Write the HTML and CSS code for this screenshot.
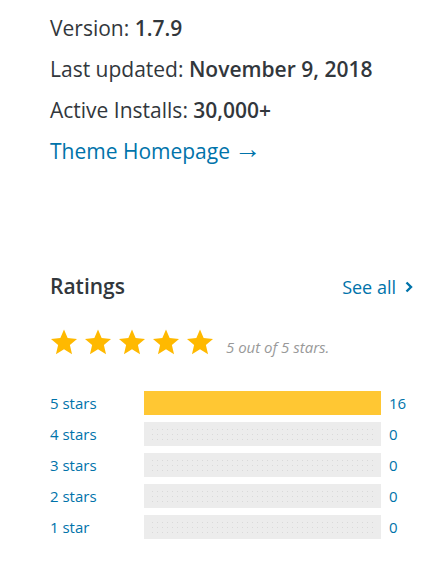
FILE: index.html
```html
<!DOCTYPE html>
<html>
<head>
  <meta charset="UTF-8">
  <title>Theme details</title>
  <link rel="stylesheet" href="styles.css">
</head>
<body>
  <div class="sidebar">
    <ul class="theme-meta">
      <li>Version: <strong>1.7.9</strong></li>
      <li>Last updated: <strong>November 9, 2018</strong></li>
      <li>Active Installs: <strong>30,000+</strong></li>
      <li><a href="#">Theme Homepage<span class="arrow">&rarr;</span></a></li>
    </ul>

    <div class="ratings">
      <div class="ratings-header">
        <h3>Ratings</h3>
        <a href="#" class="see-all">See all
          <svg width="8" height="12" viewBox="0 0 8 12"><polyline points="1.5,1.5 6,6 1.5,10.5" fill="none" stroke="#0073aa" stroke-width="2.4"/></svg>
        </a>
      </div>

      <div class="stars-row">
        <div class="stars">
          <svg class="star" viewBox="2 2 20 20"><polygon points="12,17.27 18.18,21 16.54,13.97 22,9.24 14.81,8.63 12,2 9.19,8.63 2,9.24 7.46,13.97 5.82,21"/></svg>
          <svg class="star" viewBox="2 2 20 20"><polygon points="12,17.27 18.18,21 16.54,13.97 22,9.24 14.81,8.63 12,2 9.19,8.63 2,9.24 7.46,13.97 5.82,21"/></svg>
          <svg class="star" viewBox="2 2 20 20"><polygon points="12,17.27 18.18,21 16.54,13.97 22,9.24 14.81,8.63 12,2 9.19,8.63 2,9.24 7.46,13.97 5.82,21"/></svg>
          <svg class="star" viewBox="2 2 20 20"><polygon points="12,17.27 18.18,21 16.54,13.97 22,9.24 14.81,8.63 12,2 9.19,8.63 2,9.24 7.46,13.97 5.82,21"/></svg>
          <svg class="star" viewBox="2 2 20 20"><polygon points="12,17.27 18.18,21 16.54,13.97 22,9.24 14.81,8.63 12,2 9.19,8.63 2,9.24 7.46,13.97 5.82,21"/></svg>
        </div>
        <span class="rating-text">5 out of 5 stars.</span>
      </div>

      <ul class="counts">
        <li class="count-row">
          <a href="#" class="count-label">5 stars</a>
          <span class="count-back"><span class="count-bar" style="width: 100%"></span></span>
          <span class="count-num">16</span>
        </li>
        <li class="count-row">
          <a href="#" class="count-label">4 stars</a>
          <span class="count-back"><span class="count-bar" style="width: 0%"></span></span>
          <span class="count-num">0</span>
        </li>
        <li class="count-row">
          <a href="#" class="count-label">3 stars</a>
          <span class="count-back"><span class="count-bar" style="width: 0%"></span></span>
          <span class="count-num">0</span>
        </li>
        <li class="count-row">
          <a href="#" class="count-label">2 stars</a>
          <span class="count-back"><span class="count-bar" style="width: 0%"></span></span>
          <span class="count-num">0</span>
        </li>
        <li class="count-row">
          <a href="#" class="count-label">1 star</a>
          <span class="count-back"><span class="count-bar" style="width: 0%"></span></span>
          <span class="count-num">0</span>
        </li>
      </ul>
    </div>
  </div>
</body>
</html>
```

FILE: styles.css
```css
/* Theme sidebar */
body {
  font-family: "Open Sans", "Liberation Sans", sans-serif;
  margin: 0;
  background-color: #fff;
  color: #32373c;
}
a {
  color: #0073aa;
  text-decoration: none;
}
.sidebar {
  padding: 13px 34px 0 50px;
}
.theme-meta {
  list-style: none;
  margin: 0;
  padding: 0;
  font-size: 21px;
  line-height: 30px;
}
.theme-meta li {
  height: 30px;
  margin-bottom: 11px;
}
.theme-meta strong {
  font-weight: 600;
}
.arrow {
  font-family: "Liberation Sans", sans-serif;
  font-size: 27px;
  line-height: 0;
  margin-left: 4px;
  vertical-align: 1px;
}
.ratings {
  margin-top: 105px;
}
.ratings-header {
  display: flex;
  justify-content: space-between;
  align-items: baseline;
}
.ratings-header h3 {
  margin: 0;
  font-size: 21px;
  font-weight: 600;
  line-height: 30px;
}
.see-all {
  font-size: 18px;
  display: flex;
  align-items: center;
  gap: 9px;
}
.stars-row {
  display: flex;
  align-items: center;
  margin-top: 26px;
}
.stars {
  display: flex;
  gap: 8px;
  padding-left: 1px;
}
.star {
  width: 26px;
  height: 27px;
  fill: #ffb900;
}
.rating-text {
  font-size: 15px;
  line-height: 20px;
  font-style: italic;
  color: #999;
  margin-left: 13px;
  padding-top: 10px;
}
.counts {
  list-style: none;
  margin: 34px 0 0;
  padding: 0;
}
.count-row {
  display: grid;
  grid-template-columns: 94px 237px auto;
  margin-bottom: 7px;
  font-size: 15px;
  line-height: 24px;
}
.count-back {
  position: relative;
  height: 24px;
  background-color: #ececec;
}
.count-back::before {
  content: "";
  position: absolute;
  top: 5px;
  bottom: 5px;
  left: 6px;
  right: 6px;
  background-image: radial-gradient(circle, #d9d9d9 0.7px, transparent 1px);
  background-size: 5px 5px;
}
.count-bar {
  position: relative;
  display: block;
  height: 24px;
  background-color: #ffc733;
}
.count-num {
  color: #0073aa;
  margin-left: 8px;
}
```
